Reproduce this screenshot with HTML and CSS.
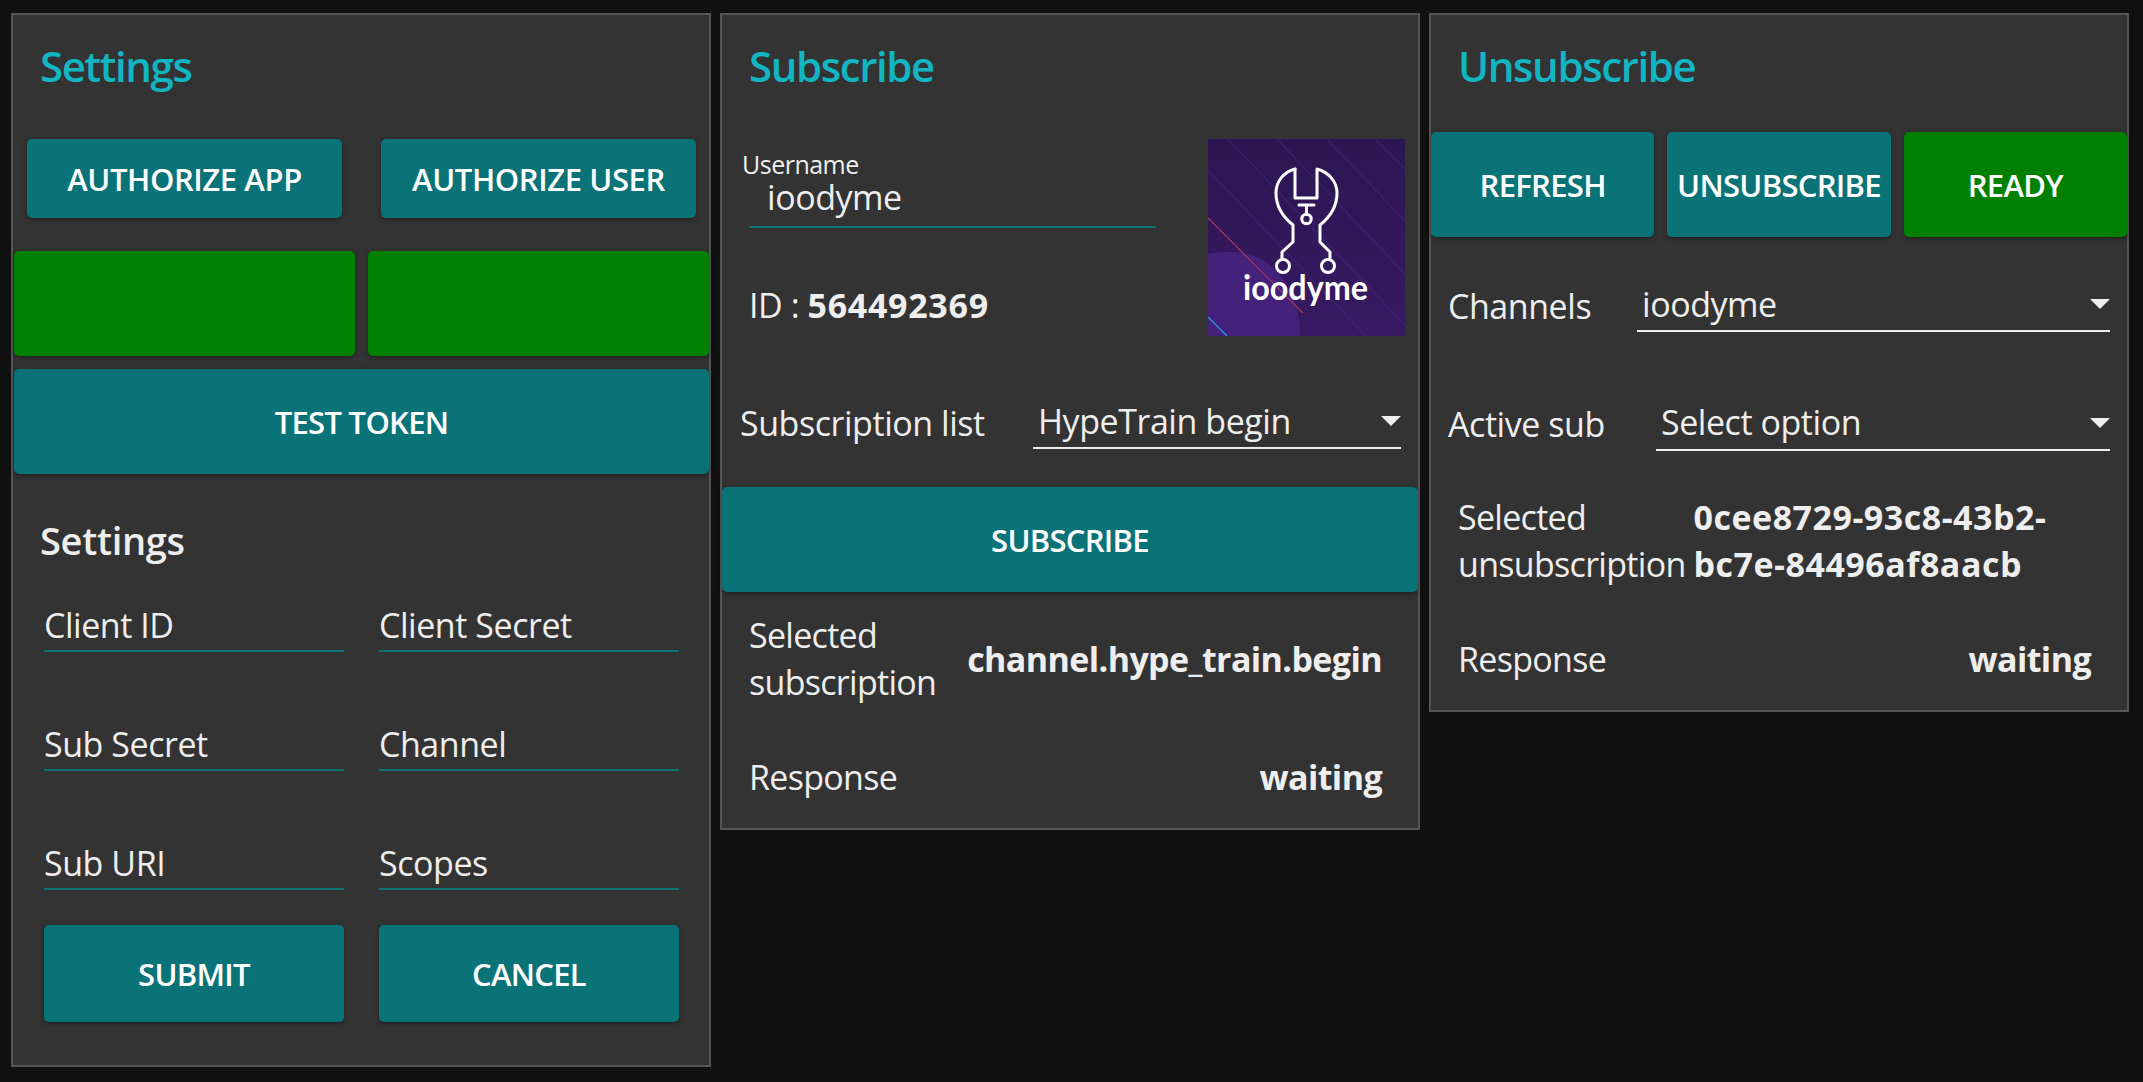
FILE: index.html
```html
<!DOCTYPE html>
<html lang="en">

<head>
  <meta charset="UTF-8">
  <meta name="viewport" content="width=device-width, initial-scale=1.0">
  <title>Twitch EventSub</title>
  <link rel="stylesheet" href="styles.css">
</head>

<body>
  <div class="panels">

    <!-- Settings -->
    <section class="panel panel-settings">
      <h2 class="panel-title">Settings</h2>
      <div class="auth-row">
        <button class="btn btn-auth">Authorize app</button>
        <button class="btn btn-auth">Authorize user</button>
      </div>
      <div class="status-row">
        <button class="btn btn-big btn-green"></button>
        <button class="btn btn-big btn-green"></button>
      </div>
      <button class="btn btn-big btn-full">Test token</button>
      <h3 class="form-title">Settings</h3>
      <div class="form-grid">
        <div class="field">Client ID</div>
        <div class="field">Client Secret</div>
        <div class="field">Sub Secret</div>
        <div class="field">Channel</div>
        <div class="field">Sub URI</div>
        <div class="field">Scopes</div>
        <button class="btn btn-form">Submit</button>
        <button class="btn btn-form">Cancel</button>
      </div>
    </section>

    <!-- Subscribe -->
    <section class="panel panel-subscribe">
      <h2 class="panel-title">Subscribe</h2>
      <div class="user-row">
        <div class="user-info">
          <div class="user-label">Username</div>
          <div class="user-input">ioodyme</div>
          <div class="user-id">ID : <b class="digits">564492369</b></div>
        </div>
        <svg class="logo" viewBox="0 0 197 197">
          <defs>
            <linearGradient id="logoBg" x1="0" y1="0" x2="0" y2="1">
              <stop offset="0" stop-color="#2d1553"/>
              <stop offset="1" stop-color="#371a62"/>
            </linearGradient>
          </defs>
          <rect width="197" height="197" fill="url(#logoBg)"/>
          <path d="M0 115Q50 105 75 140Q92 165 92 197L0 197Z" fill="#44217a"/>
          <g stroke="#44277c" stroke-width="1" fill="none">
            <path d="M20 0L197 186"/>
            <path d="M69 0L197 135"/>
            <path d="M119 0L197 82"/>
            <path d="M167 0L197 30"/>
            <path d="M0 31L158 197"/>
            <path d="M0 128L66 197"/>
          </g>
          <path d="M0 79L95 174" stroke="#a63c5c" stroke-width="1.2" fill="none"/>
          <path d="M0 178L19 197" stroke="#2f8fd8" stroke-width="1.5" fill="none"/>
          <g stroke="#fff" stroke-width="3" fill="none" stroke-linejoin="round" stroke-linecap="round">
            <path d="M87 30V59H109V30C120 33 129 42 129 54C129 68 122 78 112 86V103L122 113V119"/>
            <path d="M87 30C76 33 68 42 68 54C68 68 75 78 85 86V103L74 113V119"/>
            <path d="M91 66H106M98.5 66V75"/>
            <circle cx="98.5" cy="80" r="4.7"/>
            <circle cx="75" cy="127" r="6.5"/>
            <circle cx="120" cy="127" r="6.5"/>
          </g>
          <text class="logo-text" x="35" y="161" textLength="125" lengthAdjust="spacingAndGlyphs">ioodyme</text>
        </svg>
      </div>
      <div class="select-row select-row-sub">
        <span class="select-label">Subscription list</span>
        <div class="select">HypeTrain begin</div>
      </div>
      <button class="btn btn-big btn-full">Subscribe</button>
      <div class="info-row info-row-sub">
        <span class="info-label">Selected<br>subscription</span>
        <b class="info-value">channel.hype_train.begin</b>
      </div>
      <div class="info-row info-row-resp">
        <span class="info-label">Response</span>
        <b class="info-value">waiting</b>
      </div>
    </section>

    <!-- Unsubscribe -->
    <section class="panel panel-unsubscribe">
      <h2 class="panel-title">Unsubscribe</h2>
      <div class="action-row">
        <button class="btn btn-big">Refresh</button>
        <button class="btn btn-big">Unsubscribe</button>
        <button class="btn btn-big btn-green">Ready</button>
      </div>
      <div class="select-row select-row-channels">
        <span class="select-label">Channels</span>
        <div class="select">ioodyme</div>
      </div>
      <div class="select-row select-row-active">
        <span class="select-label">Active sub</span>
        <div class="select">Select option</div>
      </div>
      <div class="info-row info-row-unsub">
        <span class="info-label">Selected<br>unsubscription</span>
        <b class="info-value digits">0cee8729-93c8-43b2-<br>bc7e-84496af8aacb</b>
      </div>
      <div class="info-row info-row-resp">
        <span class="info-label">Response</span>
        <b class="info-value">waiting</b>
      </div>
    </section>

  </div>
</body>

</html>
```

FILE: styles.css
```css
* {
  box-sizing: border-box;
}

body {
  margin: 0;
  height: 1082px;
  overflow: hidden;
  background-color: #111111;
  color: #eeeeee;
  font-family: "Open Sans", "Noto Sans", sans-serif;
  font-size: 34px;
  letter-spacing: -0.45px;
}

.panels {
  display: flex;
  align-items: flex-start;
  gap: 9px;
  padding: 13px 0 0 11px;
}

.panel {
  width: 700px;
  border: 2px solid #555555;
  background-color: #333333;
}

.panel-settings {
  height: 1054px;
}

.panel-subscribe {
  height: 817px;
}

.panel-unsubscribe {
  height: 699px;
}

.panel-title {
  margin: 24px 0 0 27px;
  height: 54px;
  line-height: 54px;
  font-size: 42px;
  font-weight: 600;
  letter-spacing: -1.4px;
  color: #12b5c2;
}

/* buttons */
.btn {
  display: block;
  padding: 0;
  border: none;
  border-radius: 5px;
  background-color: #0a7378;
  color: #ffffff;
  font-family: inherit;
  font-size: 31px;
  font-weight: 600;
  letter-spacing: -0.7px;
  text-transform: uppercase;
  box-shadow: 0 3px 3px -2px rgba(0, 0, 0, 0.2), 0 2px 4px rgba(0, 0, 0, 0.14), 0 1px 7px rgba(0, 0, 0, 0.12);
}

.btn-green {
  background-color: #008000;
}

.btn-big {
  height: 105px;
}

.btn-full {
  width: 696px;
}

.auth-row {
  display: flex;
  justify-content: space-between;
  margin-top: 46px;
  padding: 0 13px 0 14px;
}

.btn-auth {
  width: 315px;
  height: 79px;
  letter-spacing: -0.4px;
}

.status-row {
  display: flex;
  justify-content: space-between;
  margin-top: 33px;
  margin-bottom: 13px;
  padding-left: 1px;
}

.status-row .btn {
  width: 341px;
}

.panel-settings .btn-full {
  margin-left: 1px;
  width: 695px;
}

/* settings form */
.form-title {
  margin: 39px 0 1px 27px;
  height: 54px;
  line-height: 54px;
  font-size: 38px;
  font-weight: 600;
  letter-spacing: -0.3px;
}

.form-grid {
  display: grid;
  grid-template-columns: 300px 300px;
  grid-template-rows: 84px 84px 84px 97px;
  gap: 35px;
  padding-left: 31px;
}

.field {
  align-self: end;
  height: 54px;
  line-height: 55px;
  border-bottom: 2px solid #0a7378;
}

.btn-form {
  width: 300px;
  height: 97px;
}

/* subscribe */
.user-row {
  display: flex;
  justify-content: space-between;
  margin-top: 46px;
  padding: 0 13px 0 27px;
}

.user-info {
  width: 407px;
}

.user-label {
  height: 26px;
  margin: 12px 0 0 -7px;
  line-height: 26px;
  font-size: 25px;
  letter-spacing: -0.5px;
}

.user-input {
  height: 51px;
  padding-left: 18px;
  line-height: 40px;
  border-bottom: 2px solid #0a7378;
}

.user-id {
  margin-top: 54px;
  line-height: 46px;
}

.digits {
  letter-spacing: 0.7px;
}

.logo {
  display: block;
  width: 197px;
  height: 197px;
}

.logo-text {
  fill: #ffffff;
  font-family: "Lato", sans-serif;
  font-size: 34px;
  font-weight: 700;
  letter-spacing: 0;
}

.select-row {
  display: flex;
  align-items: flex-end;
}

.select-label {
  position: relative;
  top: -2px;
  height: 48px;
  line-height: 48px;
}

.select {
  position: relative;
  height: 50px;
  padding-left: 5px;
  line-height: 45px;
  border-bottom: 2px solid #eeeeee;
}

/* dropdown arrow */
.select::after {
  content: "";
  position: absolute;
  right: 0;
  top: 17px;
  border-left: 10px solid transparent;
  border-right: 10px solid transparent;
  border-top: 10px solid #eeeeee;
}

.select-row-sub {
  justify-content: space-between;
  margin-top: 63px;
  margin-bottom: 38px;
  padding: 0 17px 0 18px;
}

.select-row-sub .select {
  width: 368px;
}

.info-row {
  display: flex;
  align-items: center;
  justify-content: space-between;
  line-height: 47px;
}

.info-label {
  letter-spacing: -0.7px;
}

.info-value {
  font-weight: 700;
  letter-spacing: -0.6px;
}

.info-value.digits {
  letter-spacing: 0.5px;
}

.info-row-sub {
  margin-top: 20px;
  padding: 0 36px 0 27px;
}

.info-row-resp {
  margin-top: 48px;
  padding: 0 36px 0 27px;
}

/* unsubscribe */
.action-row {
  display: flex;
  gap: 13px;
  margin-top: 39px;
}

.action-row .btn {
  flex: 1;
}

.select-row-channels {
  margin-top: 45px;
  padding: 0 17px;
}

.select-row-channels .select {
  width: 473px;
  margin-left: auto;
}

.select-row-active {
  margin-top: 69px;
  padding: 0 17px;
}

.select-row-active .select-label {
  top: -3px;
}

.select-row-active .select {
  width: 454px;
  margin-left: auto;
  line-height: 43px;
}

.info-row-unsub {
  justify-content: flex-start;
  gap: 8px;
  margin-top: 43px;
  padding: 0 27px;
}
```
